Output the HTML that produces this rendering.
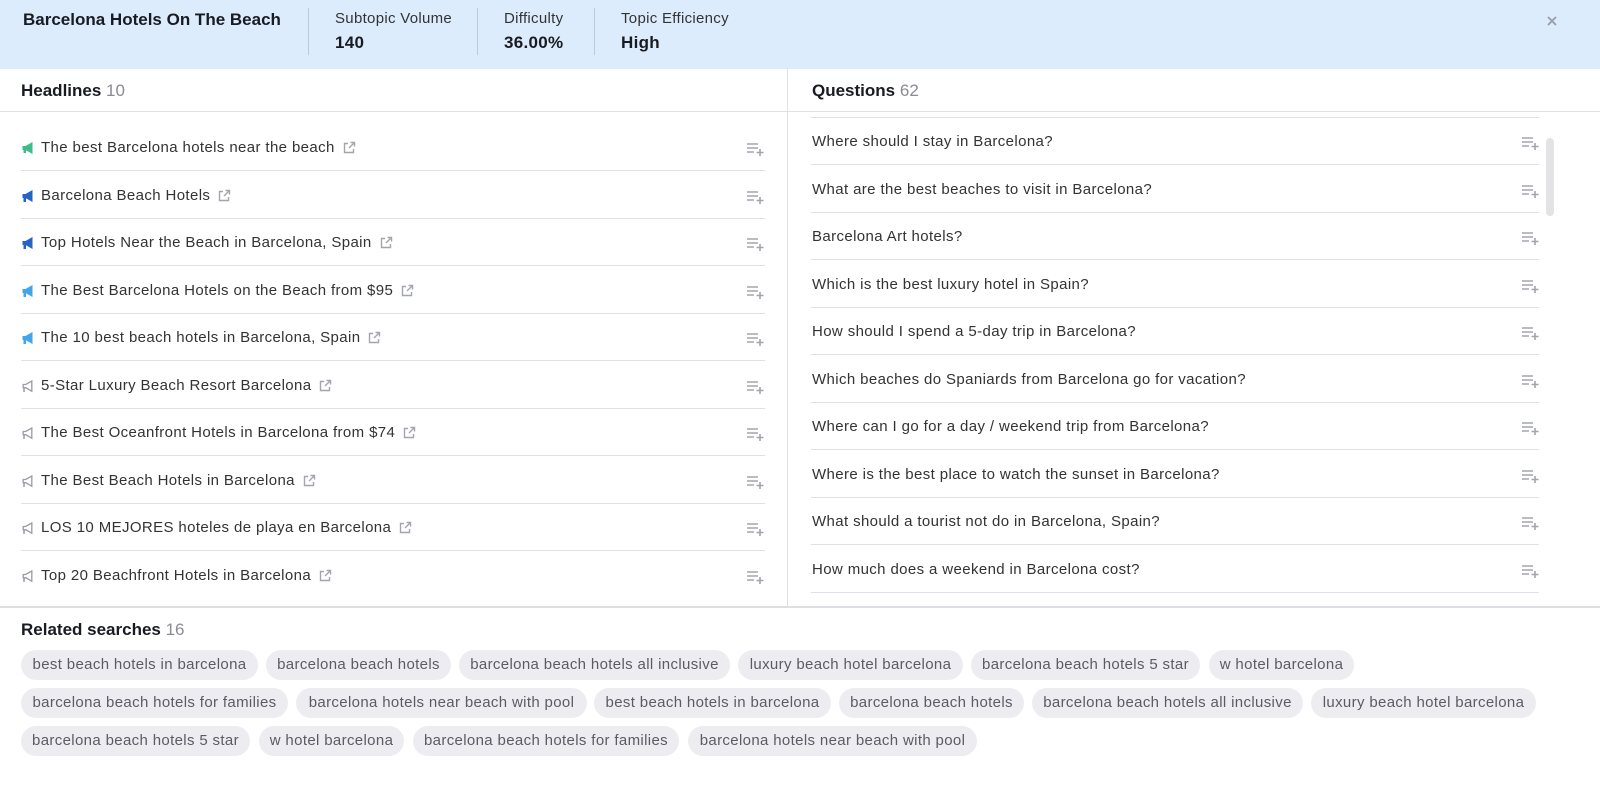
<!DOCTYPE html>
<html><head><meta charset="utf-8"><style>
*{margin:0;padding:0;box-sizing:border-box}
body{width:1600px;height:787px;overflow:hidden;background:#fff;font-family:"Liberation Sans",Arial,sans-serif;color:#333;position:relative}
.hdr{position:absolute;left:0;top:0;width:1600px;height:69px;background:#ddecfc}
.abs{position:absolute;white-space:nowrap}
.t{font-size:17px;font-weight:bold;color:#191b23}
.lab{font-size:15px;color:#333;letter-spacing:0.3px}
.val{font-size:17px;font-weight:bold;color:#191b23;letter-spacing:0.3px}
.vd{position:absolute;top:8px;width:1px;height:47px;background:#bfc9d6}
.hl{position:absolute;height:1px;background:#e0e1e6}
.h2{font-size:17px;font-weight:bold;color:#191b23}
.h2 span{font-weight:normal;color:#8b8b94}
.row{position:absolute;font-size:15px;color:#333;line-height:20px;white-space:nowrap;display:flex;align-items:center;letter-spacing:0.38px}
.ext{margin-left:7px}
.add{position:absolute}
.chip{position:absolute;height:30px;line-height:30px;text-align:center;border-radius:15px;background:#ededf1;color:#5b5b66;font-size:15px;white-space:nowrap;letter-spacing:0.35px}
</style></head><body>
<div class="hdr"></div>
<div class="abs t" style="left:23px;top:10px">Barcelona Hotels On The Beach</div>
<div class="vd" style="left:308px"></div>
<div class="abs lab" style="left:335px;top:10px">Subtopic Volume</div>
<div class="abs val" style="left:335px;top:33px">140</div>
<div class="vd" style="left:477px"></div>
<div class="abs lab" style="left:504px;top:10px">Difficulty</div>
<div class="abs val" style="left:504px;top:33px">36.00%</div>
<div class="vd" style="left:594px"></div>
<div class="abs lab" style="left:621px;top:10px">Topic Efficiency</div>
<div class="abs val" style="left:621px;top:33px">High</div>
<svg class="abs" style="left:1546px;top:15px" width="12" height="12" viewBox="0 0 12 12"><path d="M2 2L10 10M10 2L2 10" stroke="#9a9ca5" stroke-width="1.8"/></svg>

<div class="abs h2" style="left:21px;top:81px">Headlines <span>10</span></div>
<div class="abs h2" style="left:812px;top:81px">Questions <span>62</span></div>
<div class="hl" style="left:0;top:111px;width:1600px"></div>
<div class="abs" style="left:787px;top:69px;width:1px;height:538px;background:#e0e1e6"></div>
<div class="hl" style="left:0;top:606px;width:1600px;height:2px;background:#dedfe3"></div>
<div class="abs" style="left:1546px;top:138px;width:8px;height:78px;border-radius:4px;background:#e3e3e6"></div>

<div id="L"></div><div id="R"></div>

<div class="abs h2" style="left:21px;top:620px">Related searches <span>16</span></div>
<div id="C"></div>

<script>
const mg={g:'<path d="M1 6h3l7-4v12l-7-4H1z" fill="#3dbb8a"/><rect x="2" y="9" width="2.5" height="4" fill="#3dbb8a"/>',
b:'<path d="M1 6h3l7-4v12l-7-4H1z" fill="#2463c7"/><rect x="2" y="9" width="2.5" height="5" fill="#2463c7"/>',
l:'<path d="M1 6h3l7-4v12l-7-4H1z" fill="#43a4ee"/><rect x="2" y="9" width="2.5" height="5" fill="#43a4ee"/>',
o:'<path d="M1.7 6.5h2.5l6.1-3.5v10.2l-6.1-3.5H1.7z" fill="none" stroke="#9a9ca5" stroke-width="1.3"/><path d="M2.5 10v4" stroke="#9a9ca5" stroke-width="1.5"/>'};
const ext='<svg class="ext" width="14" height="14" viewBox="0 0 14 14"><path d="M6 2.5H2.5v9h9V8" fill="none" stroke="#a3a5ad" stroke-width="1.4"/><path d="M7 7l5.5-5.5M8.5 1.5h4v4" fill="none" stroke="#a3a5ad" stroke-width="1.4"/></svg>';
const add='<svg width="18" height="14" viewBox="0 0 18 14"><path d="M0 2h11M0 6h11M0 10h7M13 7v7M9.5 10.5h7" stroke="#a3a5ad" stroke-width="1.6"/></svg>';
const H=[['g','The best Barcelona hotels near the beach'],['b','Barcelona Beach Hotels'],['b','Top Hotels Near the Beach in Barcelona, Spain'],['l','The Best Barcelona Hotels on the Beach from $95'],['l','The 10 best beach hotels in Barcelona, Spain'],['o','5-Star Luxury Beach Resort Barcelona'],['o','The Best Oceanfront Hotels in Barcelona from $74'],['o','The Best Beach Hotels in Barcelona'],['o','LOS 10 MEJORES hoteles de playa en Barcelona'],['o','Top 20 Beachfront Hotels in Barcelona']];
let s='';
H.forEach((h,i)=>{const c=146+i*47.55;
s+=`<div class="row" style="left:20px;top:${c-8}px"><svg width="15" height="16" viewBox="0 0 12 16" style="margin-right:6px">${mg[h[0]]}</svg>${h[1]}${ext}</div>`;
s+=`<div class="add" style="left:747px;top:${c-4}px">${add}</div>`;
if(i<9)s+=`<div class="hl" style="left:21px;top:${c+24}px;width:744px"></div>`;});
document.getElementById('L').innerHTML=s;
const Q=['Where should I stay in Barcelona?','What are the best beaches to visit in Barcelona?','Barcelona Art hotels?','Which is the best luxury hotel in Spain?','How should I spend a 5-day trip in Barcelona?','Which beaches do Spaniards from Barcelona go for vacation?','Where can I go for a day / weekend trip from Barcelona?','Where is the best place to watch the sunset in Barcelona?','What should a tourist not do in Barcelona, Spain?','How much does a weekend in Barcelona cost?'];
s='<div class="hl" style="left:811px;top:117px;width:728px"></div>';
Q.forEach((q,i)=>{const c=140+i*47.55;
s+=`<div class="row" style="left:812px;top:${c-8}px">${q}</div>`;
s+=`<div class="add" style="left:1522px;top:${c-4}px">${add}</div>`;
s+=`<div class="hl" style="left:811px;top:${c+24}px;width:728px"></div>`;});
document.getElementById('R').innerHTML=s;
const C=[[21,258,650,'best beach hotels in barcelona'],[266,451,650,'barcelona beach hotels'],[459,730,650,'barcelona beach hotels all inclusive'],[738,963,650,'luxury beach hotel barcelona'],[971,1200,650,'barcelona beach hotels 5 star'],[1209,1354,650,'w hotel barcelona'],
[21,288,688,'barcelona beach hotels for families'],[296,587,688,'barcelona hotels near beach with pool'],[594,831,688,'best beach hotels in barcelona'],[839,1024,688,'barcelona beach hotels'],[1032,1303,688,'barcelona beach hotels all inclusive'],[1311,1536,688,'luxury beach hotel barcelona'],
[21,250,726,'barcelona beach hotels 5 star'],[259,404,726,'w hotel barcelona'],[413,679,726,'barcelona beach hotels for families'],[688,977,726,'barcelona hotels near beach with pool']];
document.getElementById('C').innerHTML=C.map(c=>`<div class="chip" style="left:${c[0]}px;width:${c[1]-c[0]}px;top:${c[2]}px">${c[3]}</div>`).join('');
</script>
</body></html>
